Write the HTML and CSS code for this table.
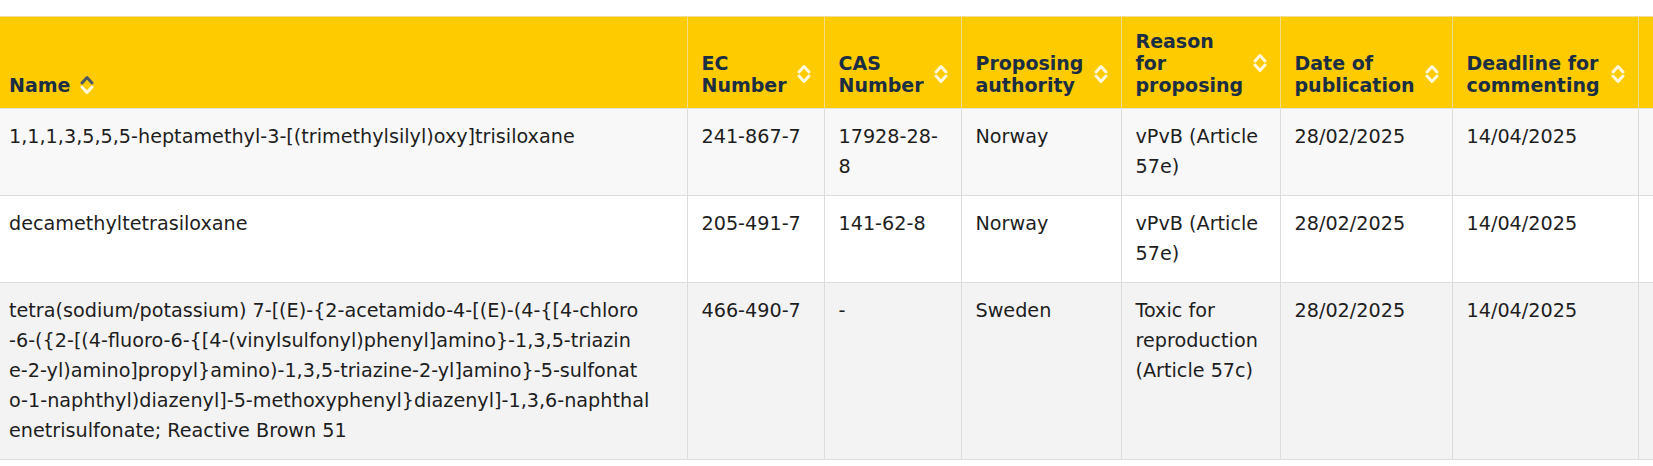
FILE: index.html
```html
<!DOCTYPE html>
<html lang="en">
<head>
<meta charset="utf-8">
<title>Substances proposed for SVHC</title>
<link rel="stylesheet" href="styles.css">
</head>
<body>
<div class="table-wrap">
<table class="svhc">
  <colgroup>
    <col class="c-name">
    <col class="c-ec">
    <col class="c-cas">
    <col class="c-auth">
    <col class="c-reason">
    <col class="c-date">
    <col class="c-deadline">
    <col class="c-action">
  </colgroup>
  <thead>
    <tr>
      <th class="first"><div class="th-in"><span class="label">Name</span><svg class="sort" viewBox="0 0 14 20" width="14" height="20"><path class="up active" d="M2 8 L7 2.5 L12 8"/><path class="down" d="M2 12 L7 17.5 L12 12"/></svg></div></th>
      <th><div class="th-in"><span class="label">EC Number</span><svg class="sort" viewBox="0 0 14 20" width="14" height="20"><path class="up" d="M2 8 L7 2.5 L12 8"/><path class="down" d="M2 12 L7 17.5 L12 12"/></svg></div></th>
      <th><div class="th-in"><span class="label">CAS Number</span><svg class="sort" viewBox="0 0 14 20" width="14" height="20"><path class="up" d="M2 8 L7 2.5 L12 8"/><path class="down" d="M2 12 L7 17.5 L12 12"/></svg></div></th>
      <th><div class="th-in"><span class="label">Proposing authority</span><svg class="sort" viewBox="0 0 14 20" width="14" height="20"><path class="up" d="M2 8 L7 2.5 L12 8"/><path class="down" d="M2 12 L7 17.5 L12 12"/></svg></div></th>
      <th><div class="th-in"><span class="label">Reason for proposing</span><svg class="sort" viewBox="0 0 14 20" width="14" height="20"><path class="up" d="M2 8 L7 2.5 L12 8"/><path class="down" d="M2 12 L7 17.5 L12 12"/></svg></div></th>
      <th><div class="th-in"><span class="label">Date of publication</span><svg class="sort" viewBox="0 0 14 20" width="14" height="20"><path class="up" d="M2 8 L7 2.5 L12 8"/><path class="down" d="M2 12 L7 17.5 L12 12"/></svg></div></th>
      <th><div class="th-in"><span class="label">Deadline for commenting</span><svg class="sort" viewBox="0 0 14 20" width="14" height="20"><path class="up" d="M2 8 L7 2.5 L12 8"/><path class="down" d="M2 12 L7 17.5 L12 12"/></svg></div></th>
      <th class="action"></th>
    </tr>
  </thead>
  <tbody>
    <tr class="odd">
      <td class="first name">1,1,1,3,5,5,5-heptamethyl-3-[(trimethylsilyl)oxy]trisiloxane</td>
      <td>241-867-7</td>
      <td>17928-28-8</td>
      <td>Norway</td>
      <td>vPvB (Article 57e)</td>
      <td>28/02/2025</td>
      <td>14/04/2025</td>
      <td><a class="btn" href="#" aria-label="Comment"><svg viewBox="0 0 20 20" width="20" height="20"><path d="M3 4 H17 V13 H8 L4 16 V13 H3 Z"/></svg></a></td>
    </tr>
    <tr class="even">
      <td class="first name">decamethyltetrasiloxane</td>
      <td>205-491-7</td>
      <td>141-62-8</td>
      <td>Norway</td>
      <td>vPvB (Article 57e)</td>
      <td>28/02/2025</td>
      <td>14/04/2025</td>
      <td><a class="btn" href="#" aria-label="Comment"><svg viewBox="0 0 20 20" width="20" height="20"><path d="M3 4 H17 V13 H8 L4 16 V13 H3 Z"/></svg></a></td>
    </tr>
    <tr class="odd hover">
      <td class="first name">tetra(sodium/potassium) 7-[(E)-{2-acetamido-4-[(E)-(4-{[4-chloro<br>-6-({2-[(4-fluoro-6-{[4-(vinylsulfonyl)phenyl]amino}-1,3,5-triazin<br>e-2-yl)amino]propyl}amino)-1,3,5-triazine-2-yl]amino}-5-sulfonat<br>o-1-naphthyl)diazenyl]-5-methoxyphenyl}diazenyl]-1,3,6-naphthal<br>enetrisulfonate; Reactive Brown 51</td>
      <td>466-490-7</td>
      <td>-</td>
      <td>Sweden</td>
      <td>Toxic for reproduction (Article 57c)</td>
      <td>28/02/2025</td>
      <td>14/04/2025</td>
      <td><a class="btn" href="#" aria-label="Comment"><svg viewBox="0 0 20 20" width="20" height="20"><path d="M3 4 H17 V13 H8 L4 16 V13 H3 Z"/></svg></a></td>
    </tr>
  </tbody>
</table>
</div>
</body>
</html>
```
FILE: styles.css
```css
html, body {
  margin: 0;
  padding: 0;
  background: #ffffff;
}

body {
  font-family: "DejaVu Sans", Verdana, sans-serif;
  color: #1e1e1e;
  overflow: hidden;
}

.table-wrap {
  padding-top: 16px;
  width: 1900px;
}

.svhc {
  border-collapse: collapse;
  table-layout: fixed;
  width: 1838px;
}

.c-name { width: 687px; }
.c-ec { width: 137px; }
.c-cas { width: 137px; }
.c-auth { width: 160px; }
.c-reason { width: 159px; }
.c-date { width: 172px; }
.c-deadline { width: 186px; }
.c-action { width: 200px; }

.svhc th {
  background: #fecb00;
  color: #1b2e44;
  font-weight: bold;
  font-size: 19px;
  line-height: 22px;
  text-align: left;
  vertical-align: bottom;
  padding: 13px 13px 12px 14px;
  border-top: 1px solid #eedc9c;
  border-left: 1px solid #f2dc8a;
  border-right: 1px solid #f2dc8a;
  border-bottom: 1px solid #e6e3d6;
}

.svhc th.first {
  padding-left: 9px;
  border-left: none;
}

.th-in {
  display: flex;
  align-items: center;
  gap: 10px;
}

.label {
  min-width: 0;
}

.sort {
  flex: none;
  display: block;
}

.sort path {
  fill: none;
  stroke: #fff8dc;
  stroke-width: 3;
  stroke-linecap: round;
  stroke-linejoin: round;
}

.sort path.active {
  stroke: #4d5862;
}

.svhc td {
  font-size: 19.2px;
  line-height: 30px;
  vertical-align: top;
  padding: 13px 13px 13px 14px;
  border: 1px solid #dcdcdc;
}

.svhc td.first {
  padding-left: 9px;
  border-left: none;
}

.name {
  word-break: break-all;
}

tr.odd td {
  background: #f8f8f8;
}

tr.even td {
  background: #ffffff;
}

tr.hover td {
  background: #f3f3f3;
}

.btn {
  display: flex;
  align-items: center;
  justify-content: center;
  margin-top: 3px;
  width: 44px;
  height: 42px;
  box-sizing: border-box;
  background: #dcecf7;
  border: 1px solid #b9d6ea;
  border-radius: 3px;
}

.btn svg path {
  fill: #2a6496;
}
```
